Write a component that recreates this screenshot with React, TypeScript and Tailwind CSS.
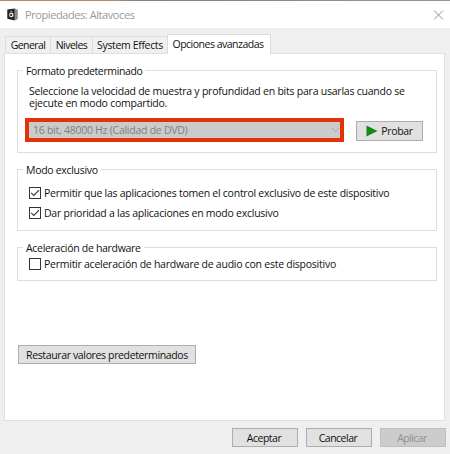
import type { ReactNode } from "react";

const TABS = [
  { label: "General", className: "w-[45px] tracking-[-0.6px]" },
  { label: "Niveles", className: "w-[42px] tracking-[-0.5px]" },
  { label: "System Effects", className: "w-[75px] tracking-[-0.35px]" },
];

function SpeakerIcon() {
  return (
    <svg width="12" height="13" viewBox="0 0 12 13" className="shrink-0">
      <path d="M0.3 1.6 7.8 0.6v11.8l-7.5-1.6z" fill="#222" />
      <path d="M7.8 0.6 10.8 1.8v9.2l-3 1.4z" fill="#8a8a8a" />
      <ellipse cx="4.2" cy="3.4" rx="1.1" ry="0.8" fill="#888" />
      <ellipse cx="4.3" cy="6.9" rx="2.2" ry="2.4" fill="#eee" />
      <ellipse cx="4.1" cy="6.9" rx="1" ry="1.2" fill="#222" />
    </svg>
  );
}

interface GroupBoxProps {
  title: string;
  titleClass: string;
  className: string;
  children: ReactNode;
}

function GroupBox({ title, titleClass, className, children }: GroupBoxProps) {
  return (
    <section className={`relative w-[420px] border border-[#dedede] ${className}`}>
      <h2 className={`absolute -top-[7px] left-[5px] whitespace-nowrap bg-white px-[3px] leading-[15px] ${titleClass}`}>
        {title}
      </h2>
      {children}
    </section>
  );
}

interface CheckRowProps {
  label: string;
  checked?: boolean;
}

function CheckRow({ label, checked }: CheckRowProps) {
  return (
    <label className="flex h-3 items-center gap-[3px]">
      <svg width="12" height="12" viewBox="0 0 12 12" className="shrink-0">
        <rect x="0.5" y="0.5" width="11" height="11" fill="#fff" stroke="#333" />
        {checked && <path d="M2.2 5.8 4.8 8.4 10 3.2" fill="none" stroke="#333" strokeWidth="1.1" />}
      </svg>
      <span className="whitespace-nowrap tracking-[-0.25px]">{label}</span>
    </label>
  );
}

interface DialogButtonProps {
  className: string;
  disabled?: boolean;
  children: ReactNode;
}

function DialogButton({ className, disabled, children }: DialogButtonProps) {
  const tone = disabled ? "border-[#bfbfbf] bg-[#cccccc] text-[#909090]" : "border-[#adadad] bg-[#e1e1e1]";
  return (
    <button
      type="button"
      disabled={disabled}
      className={`flex items-center justify-center whitespace-nowrap border ${tone} ${className}`}
    >
      {children}
    </button>
  );
}

export default function App() {
  return (
    <main className="flex h-[454px] w-[450px] flex-col overflow-hidden bg-[#efefef] font-['Open_Sans','Noto_Sans',sans-serif] text-[10.5px] font-medium leading-3 text-[#111]">
      <div className="h-px bg-linear-to-r from-[#b48a6c] from-25% via-[#75858d] via-30% to-[#8d999b]" />
      <header className="flex h-[27px] items-center justify-between bg-white pl-[7px] pr-[6px]">
        <div className="flex items-center gap-[6px]">
          <SpeakerIcon />
          <h1 className="whitespace-nowrap text-[11px] font-normal tracking-[-0.42px] text-[#999]">
            Propiedades: Altavoces
          </h1>
        </div>
        <svg width="11" height="10" viewBox="0 0 11 10" className="shrink-0">
          <path d="M1 0.5 10 9.5M10 0.5 1 9.5" stroke="#909090" />
        </svg>
      </header>

      <nav className="flex h-[25px] items-end pl-[5px]">
        {TABS.map((tab) => (
          <div
            key={tab.label}
            className={`flex h-[17px] items-center justify-center whitespace-nowrap border-l border-t border-[#dcdcdc] bg-[#f0f0f0] ${tab.className}`}
          >
            {tab.label}
          </div>
        ))}
        <div className="relative z-10 -mb-px flex h-5 w-[104px] items-center justify-center whitespace-nowrap border-x border-t border-[#dcdcdc] bg-white pb-px pr-[2px] tracking-[-0.5px]">
          Opciones avanzadas
        </div>
      </nav>

      <div className="ml-1 h-[368px] w-[441px] border border-[#e0e0e0] bg-white pl-3">
        <GroupBox
          title="Formato predeterminado"
          titleClass="tracking-[-0.37px]"
          className="mt-4 h-[83px] pl-[11px] pt-[14px]"
        >
          <p className="whitespace-nowrap tracking-[-0.23px]">
            Seleccione la velocidad de muestra y profundidad en bits para usarlas cuando se
            <br />
            ejecute en modo compartido.
          </p>
          <div className="-ml-1 mt-[9px] flex items-center gap-3">
            <div className="flex h-6 w-[319px] items-center justify-between border-4 border-[#e33209] bg-[#cbcbcb] pl-1 text-[#808080]">
              <span className="tracking-[-0.26px]">16 bit, 48000 Hz (Calidad de DVD)</span>
              <svg width="9" height="6" viewBox="0 0 9 6">
                <path d="M1 1 4.5 4.5 8 1" fill="none" stroke="#a8a8a8" />
              </svg>
            </div>
            <DialogButton className="mt-[2px] h-5 w-[67px] gap-[3px] tracking-[-0.3px]">
              <svg width="12" height="12" viewBox="0 0 12 12">
                <path d="M0.5 0.5 11.5 6 0.5 11.5z" fill="#138a13" />
              </svg>
              Probar
            </DialogButton>
          </div>
        </GroupBox>

        <GroupBox
          title="Modo exclusivo"
          titleClass="tracking-[-0.3px]"
          className="mt-4 flex h-[62px] flex-col gap-2 pl-[11px] pt-[17px]"
        >
          <CheckRow
            checked
            label="Permitir que las aplicaciones tomen el control exclusivo de este dispositivo"
          />
          <CheckRow checked label="Dar prioridad a las aplicaciones en modo exclusivo" />
        </GroupBox>

        <GroupBox
          title="Aceleración de hardware"
          titleClass="tracking-[-0.3px]"
          className="mt-4 h-[34px] pl-[11px] pt-[10px]"
        >
          <CheckRow label="Permitir aceleración de hardware de audio con este dispositivo" />
        </GroupBox>

        <DialogButton className="ml-px mt-16 h-[19px] w-[178px] tracking-[-0.36px]">
          Restaurar valores predeterminados
        </DialogButton>
      </div>

      <footer className="flex gap-2 pl-[232px] pt-[7px]">
        <DialogButton className="h-[19px] w-[66px] pr-[2px] tracking-[-0.5px]">Aceptar</DialogButton>
        <DialogButton className="h-[19px] w-[66px] pr-[2px] tracking-[-0.5px]">Cancelar</DialogButton>
        <DialogButton className="h-[19px] w-[66px] pr-[2px] tracking-[-0.6px]" disabled>
          Aplicar
        </DialogButton>
      </footer>
    </main>
  );
}
